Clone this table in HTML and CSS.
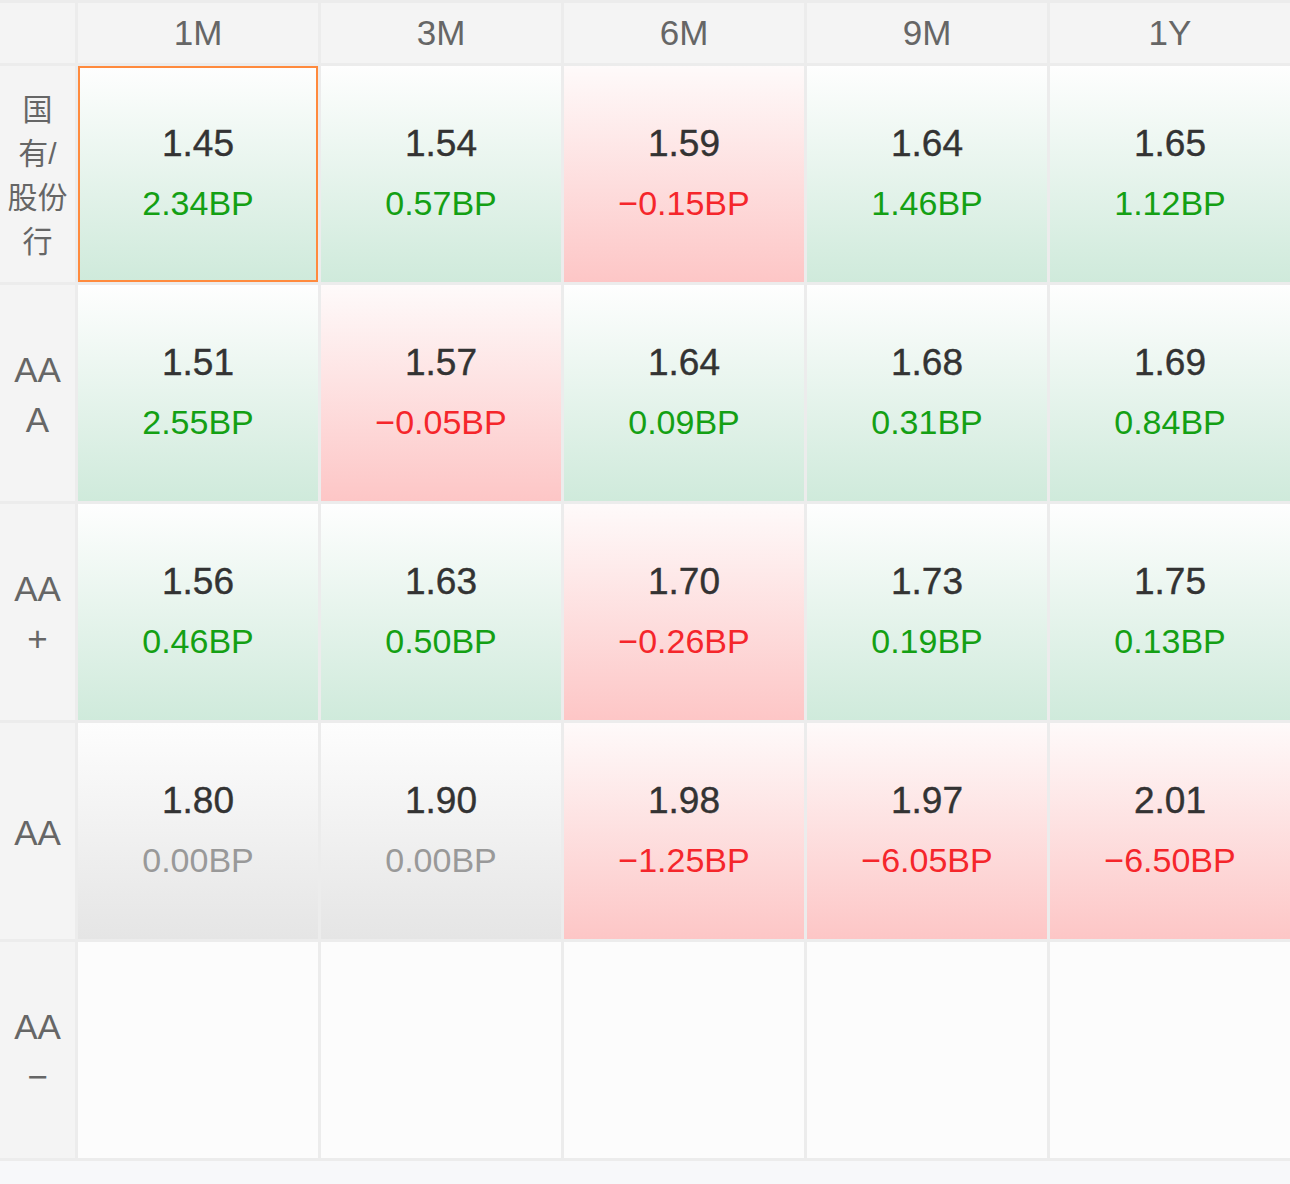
FILE: index.html
```html
<!DOCTYPE html>
<html lang="zh-CN">
<head>
    <meta charset="UTF-8">
    <meta name="viewport" content="width=device-width, initial-scale=1.0">
    <title>收益率矩阵</title>
    <link rel="stylesheet" href="styles.css">
</head>
<body>
    <div class="matrix">
        <div class="head corner"></div>
        <div class="head">1M</div>
        <div class="head">3M</div>
        <div class="head">6M</div>
        <div class="head">9M</div>
        <div class="head">1Y</div>

        <div class="label cjk">国<br>有/<br>股份<br>行</div>
        <div class="cell up active"><span class="val">1.45</span><span class="bp">2.34BP</span></div>
        <div class="cell up"><span class="val">1.54</span><span class="bp">0.57BP</span></div>
        <div class="cell down"><span class="val">1.59</span><span class="bp">&minus;0.15BP</span></div>
        <div class="cell up"><span class="val">1.64</span><span class="bp">1.46BP</span></div>
        <div class="cell up"><span class="val">1.65</span><span class="bp">1.12BP</span></div>

        <div class="label">AA<br>A</div>
        <div class="cell up"><span class="val">1.51</span><span class="bp">2.55BP</span></div>
        <div class="cell down"><span class="val">1.57</span><span class="bp">&minus;0.05BP</span></div>
        <div class="cell up"><span class="val">1.64</span><span class="bp">0.09BP</span></div>
        <div class="cell up"><span class="val">1.68</span><span class="bp">0.31BP</span></div>
        <div class="cell up"><span class="val">1.69</span><span class="bp">0.84BP</span></div>

        <div class="label">AA<br>+</div>
        <div class="cell up"><span class="val">1.56</span><span class="bp">0.46BP</span></div>
        <div class="cell up"><span class="val">1.63</span><span class="bp">0.50BP</span></div>
        <div class="cell down"><span class="val">1.70</span><span class="bp">&minus;0.26BP</span></div>
        <div class="cell up"><span class="val">1.73</span><span class="bp">0.19BP</span></div>
        <div class="cell up"><span class="val">1.75</span><span class="bp">0.13BP</span></div>

        <div class="label">AA</div>
        <div class="cell flat"><span class="val">1.80</span><span class="bp">0.00BP</span></div>
        <div class="cell flat"><span class="val">1.90</span><span class="bp">0.00BP</span></div>
        <div class="cell down"><span class="val">1.98</span><span class="bp">&minus;1.25BP</span></div>
        <div class="cell down"><span class="val">1.97</span><span class="bp">&minus;6.05BP</span></div>
        <div class="cell down"><span class="val">2.01</span><span class="bp">&minus;6.50BP</span></div>

        <div class="label">AA<br>&minus;</div>
        <div class="cell empty"></div>
        <div class="cell empty"></div>
        <div class="cell empty"></div>
        <div class="cell empty"></div>
        <div class="cell empty"></div>
    </div>
</body>
</html>
```

FILE: styles.css
```css
body {
    margin: 0;
    background-color: #f7f8fa;
    font-family: "Liberation Sans", "Noto Sans CJK SC", sans-serif;
}
.matrix {
    display: grid;
    grid-template-columns: 75px repeat(5, 240px);
    grid-template-rows: 60px repeat(5, 216px);
    gap: 3px;
    padding: 3px 0;
    background-color: #ececec;
}
.head {
    display: flex;
    align-items: center;
    justify-content: center;
    background-color: #f4f4f4;
    color: #666;
    font-size: 35px;
}
.label {
    display: flex;
    align-items: center;
    justify-content: center;
    text-align: center;
    padding-top: 4px;
    background-color: #f4f4f4;
    color: #666;
    font-size: 35px;
    line-height: 50px;
}
.label.cjk {
    font-size: 30px;
    line-height: 44px;
}
.cell {
    display: flex;
    flex-direction: column;
    align-items: center;
    justify-content: center;
    box-sizing: border-box;
}
.cell.active {
    border: 2px solid #ff8a3d;
}
.val {
    color: #333;
    font-size: 37px;
    line-height: 58px;
    -webkit-text-stroke: 0.4px #333;
}
.bp {
    font-size: 34px;
    line-height: 60px;
}
.up {
    background: linear-gradient(#fefefe, #cfeadb);
}
.up .bp {
    color: #14a014;
}
.down {
    background: linear-gradient(#fefafa, #fdc6c6);
}
.down .bp {
    color: #f5262b;
}
.flat {
    background: linear-gradient(#fdfdfd, #e5e5e5);
}
.flat .bp {
    color: #999;
}
.empty {
    background-color: #fcfcfc;
}
```
